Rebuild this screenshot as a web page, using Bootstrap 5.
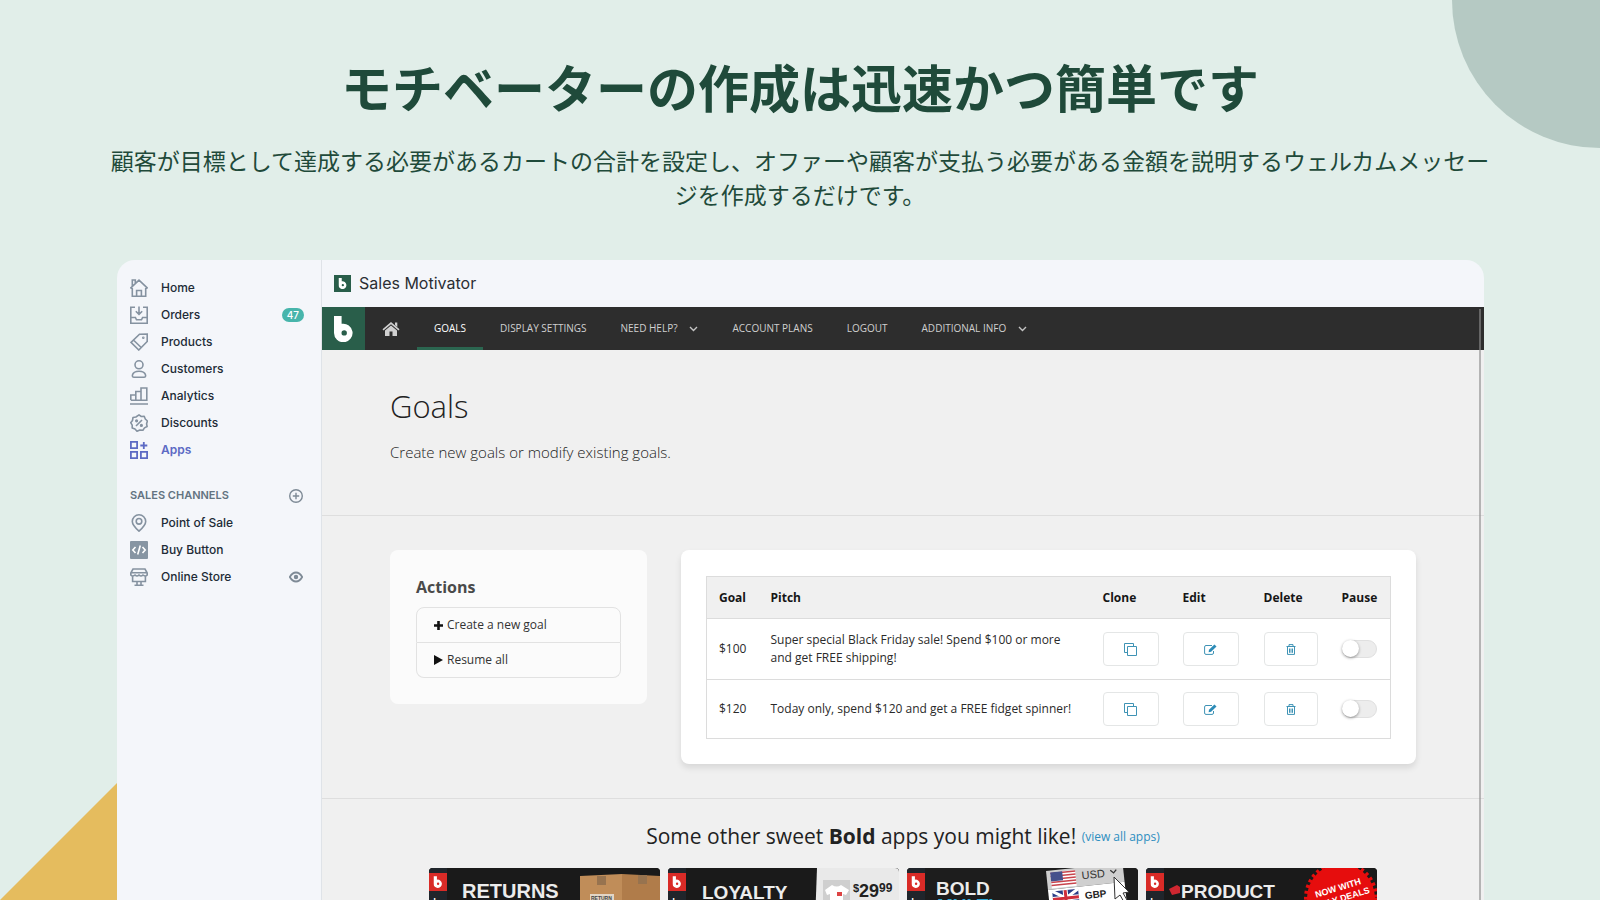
<!DOCTYPE html>
<html lang="ja">
<head>
<meta charset="utf-8">
<meta name="viewport" content="width=device-width, initial-scale=1">
<title>Sales Motivator</title>
<link href="https://cdn.jsdelivr.net/npm/bootstrap@5.3.0/dist/css/bootstrap.min.css" rel="stylesheet">
<style>
  body { background: #e1eee9; color: #1f4a3a; font-family: "Noto Sans CJK JP", sans-serif; }
  .stage { isolation: isolate; }
  .hero { padding: 48px 110px 0; }
  .hero h1 { font-size: 51px; line-height: 76px; font-weight: 700; margin-bottom: 19px; }
  .hero p { font-size: 23px; line-height: 34px; margin-bottom: 49px; }
  .deco-circle { top: -148px; right: -148px; width: 296px; height: 296px; border-radius: 50%; background: #b5c9c3; z-index: -1; }
  .deco-triangle { left: 0; bottom: 0; width: 117px; height: 117px; background: #e5bc5e; clip-path: polygon(0 100%, 100% 0, 100% 100%); z-index: -1; }
  .app-frame { margin: 0 116px 0 117px; border-radius: 18px 18px 0 0; background: #f4f6fa; font-family: Inter, sans-serif; color: #2b2e33; min-height: 0; }
  .side { width: 205px; border-right: 1px solid #dfe3e8; padding: 14px 16px 0 13px; font-size: 12px; }
  .side a, .side-head { height: 27px; font-weight: 500; color: #212b36; text-decoration: none; }
  .side a { gap: 13px; }
  .side a.current { color: #5c6ac4; font-weight: 600; }
  .side svg { flex: none; }
  .side .ico { width: 18px; height: 18px; stroke: #8592a0; fill: none; stroke-width: 1.6; }
  .side .current .ico { stroke: #5c6ac4; stroke-width: 1.8; }
  .side .ico-sm { width: 14px; height: 14px; stroke: #7e8a96; fill: none; stroke-width: 1.4; margin-right: 2px; }
  .side-head { margin-top: 19px; }
  .side-head h2 { font-size: 11px; font-weight: 600; color: #637381; }
  .count { background: #47b5ab; font-size: 10px; line-height: 14px; font-weight: 500; padding: 0 5px; margin-right: 1px; }
  .app-title { height: 47px; gap: 8px; padding-left: 12px; }
  .app-title h2 { font-size: 16px; font-weight: 400; }
  .app-body { font-family: "Open Sans", sans-serif; background: #f0f0f0; color: #222; }
  .topnav { background: #2d2d2d; height: 43px; font-size: 10px; }
  .topnav a { color: #d0d0d0; text-decoration: none; padding: 0 17px; border-bottom: 3px solid transparent; border-top: 3px solid transparent; gap: 12px; }
  .topnav a.brand { background: #295e4a; padding: 0; width: 43px; border: 0; }
  .topnav a.current { color: #fff; border-bottom-color: #2b6650; }
  .pane { padding: 34px 68px; border-bottom: 1px solid #dedede; }
  .pane-head { height: 166px; }
  .pane-head h3 { font-size: 31px; line-height: 44px; font-weight: 300; margin-bottom: 13px; }
  .pane-head p { font-size: 15px; line-height: 22px; font-weight: 300; }
  .pane-body { gap: 34px; }
  .panel { border-radius: 8px; padding: 26px; }
  .panel-actions { background: #fbfbfb; width: 257px; flex: none; }
  .panel-actions h4 { font-size: 16px; line-height: 22px; font-weight: 700; color: #4a4a4a; margin-bottom: 9px; }
  .panel-actions .list-group { --bs-list-group-bg: #fbfbfb; --bs-list-group-border-color: #e2e2e2; border-radius: 8px; }
  .panel-actions button { font-size: 12px; line-height: 18px; padding: 8px 17px; gap: 4px; color: #333; }
  .panel-goals { background: #fff; box-shadow: 0 4px 6px rgba(0,0,0,.1); padding: 26px 25px 25px; }
  .goal-table { font-size: 12px; line-height: 18px; border: 1px solid #dcdcdc; }
  .goal-table > :not(caption) > * > * { padding: 12px; border-bottom: 1px solid #dcdcdc; color: #2a2a2a; background: none; }
  .goal-table > thead > tr > th { background: #f0f0f0; font-weight: 700; color: #161616; padding-bottom: 11px; }
  .goal-table .btn { display: flex; align-items: center; justify-content: center; width: 56px; height: 34px; padding: 0; background: #fff; border: 1px solid #e4e6e6; border-radius: 4px; }
  .goal-table .btn-del { width: 54px; }
  .form-switch .form-check-input.tgl { display: block; width: 35px; height: 18px; margin: 0; float: none; border: 1px solid #e0e0e0; background: #ededed; position: relative; border-radius: 9px; }
  .tgl::before { content: ""; position: absolute; left: -1px; top: -1px; width: 17px; height: 17px; border-radius: 50%; background: #fff; box-shadow: 0 1px 3px rgba(0,0,0,.4); }
  .more { padding: 22px 0; }
  .more h3 { font-size: 21px; line-height: 30px; font-weight: 400; margin-bottom: 17px; }
  .more h3 a { font-size: 12px; line-height: 1; color: #2d8ec0; text-decoration: none; vertical-align: 3px; }
  .promos { gap: 8px; padding: 0 107px; }
  .promos a { flex: 1 1 0; border-radius: 4px; overflow: hidden; background: #1a1a1a; }
  .promos svg { display: block; width: 100%; }
  .promos text { font-family: "Liberation Sans", sans-serif; font-weight: 700; }
  .scrollline { top: 49px; bottom: 0; right: 3px; width: 2px; background: rgba(140,140,140,.6); }
</style>
</head>
<body>
<svg class="d-none">
  <symbol id="b" viewBox="0 0 20 26"><path d="M0 0H7.600V7.800A9.300 9.300 0 1 1 0 17ZM10.200 14.200A2.700 2.700 0 1 0 10.200 19.600A2.700 2.700 0 1 0 10.200 14.200Z" fill="#fff" fill-rule="evenodd"/></symbol>
  <symbol id="chev" viewBox="0 0 9 6"><path d="M1 1L4.500 4.500L8 1" fill="none" stroke="#c4c4c4" stroke-width="1.400"/></symbol>
  <symbol id="copy" viewBox="0 0 13 13"><path d="M3.500 3.500H12.500V12.500H3.500ZM3.500 9.500H.5V.5H9.500V3.500" fill="none" stroke="#3f93b5"/></symbol>
  <symbol id="edit" viewBox="0 0 13 11"><path d="M8 1.500H2Q.6 1.500 .6 3V9Q.6 10.400 2 10.400H8Q9.500 10.400 9.500 9V7" fill="none" stroke="#3f93b5"/><path d="M4.600 8.200L5 5.700L10.400.4L12.500 2.400L7.100 7.800Z" fill="#2d8cb8"/></symbol>
  <symbol id="trash" viewBox="0 0 10 11"><path d="M.5 2.500H9.500M3 2.500V.6H7V2.500M1.500 2.500V10.400H8.500V2.500M3.500 4.500V8.800M5 4.500V8.800M6.500 4.500V8.800" fill="none" stroke="#3f93b5"/></symbol>
</svg>

<div class="stage vh-100 d-flex flex-column position-relative overflow-hidden">
  <div class="deco-circle position-absolute"></div>
  <div class="deco-triangle position-absolute"></div>

  <header class="hero text-center">
    <h1>モチベーターの作成は迅速かつ簡単です</h1>
    <p>顧客が目標として達成する必要があるカートの合計を設定し、オファーや顧客が支払う必要がある金額を説明するウェルカムメッセージを作成するだけです。</p>
  </header>

  <div class="app-frame d-flex flex-grow-1 overflow-hidden position-relative">
    <aside class="side flex-shrink-0">
      <nav aria-label="Main">
        <a href="#" class="d-flex align-items-center"><svg class="ico" viewBox="0 0 18 18"><path d="M.8 8.800L9 1.200L17.200 8.800L15.700 9.800V17.200H2.300V9.800ZM2.300 7.300V1H5.300V4.500M6.600 17V11.500H11.400V17"/></svg>Home</a>
        <a href="#" class="d-flex align-items-center"><svg class="ico" viewBox="0 0 18 18"><path d="M5 1.300H.8V17.200H17.200V1.300H13M.8 11.500H5.400L6.500 13.800H11.500L12.600 11.500H17.200M9 .5V8M5.800 5.200L9 8.400L12.200 5.200"/></svg>Orders<span class="count badge rounded-pill ms-auto">47</span></a>
        <a href="#" class="d-flex align-items-center"><svg class="ico" viewBox="0 0 18 18"><path d="M9.500 1.200L17.200 1V8.500L8.800 17L1 9.300ZM3.400 7L11.200 14.500"/><circle cx="13.300" cy="4.800" r=".5"/></svg>Products</a>
        <a href="#" class="d-flex align-items-center"><svg class="ico" viewBox="0 0 18 18"><circle cx="9" cy="4.800" r="4"/><path d="M2.400 15.200C3 12.400 5.500 11.200 9 11.200S15 12.400 15.600 15.200Q15.800 17.200 14 17.200H4Q2.200 17.200 2.400 15.200Z"/></svg>Customers</a>
        <a href="#" class="d-flex align-items-center"><svg class="ico" viewBox="0 0 18 18"><path d="M.8 13V8H5.800V13.200M5.800 8V4.500H11V13.200M11 4.500V1H16.800V13.200H.8M0 17H18"/></svg>Analytics</a>
        <a href="#" class="d-flex align-items-center"><svg class="ico" viewBox="0 0 18 18"><path d="M9 .9L11.300 2.500L14.200 2.300L15.300 5L17.400 7L16.600 9.800L17.100 12.500L14.500 13.900L12.900 16.300L9.900 16L7 17.200L5 15L2.200 14L2.200 11.100L.7 8.700L2.500 6.400L3 3.500L5.900 3Z" stroke-linejoin="round"/><path d="M6 12L12 6"/><circle cx="6.600" cy="6.800" r=".8"/><circle cx="11.400" cy="11.400" r=".8"/></svg>Discounts</a>
        <a href="#" class="current d-flex align-items-center" aria-current="page"><svg class="ico" viewBox="0 0 18 18"><path d="M.9.9H7.100V7.100H.9ZM.9 10.900H7.100V17.100H.9ZM10.900 10.900H17.100V17.100H10.900ZM13.800 1V8M10.300 4.500H17.300"/></svg>Apps</a>
      </nav>
      <div class="side-head d-flex align-items-center justify-content-between">
        <h2 class="mb-0">SALES CHANNELS</h2>
        <button type="button" class="btn p-0 border-0 d-flex" aria-label="Add channel"><svg class="ico-sm" viewBox="0 0 14 14"><circle cx="7" cy="7" r="6.300"/><path d="M7 3.800V10.200M3.800 7H10.200"/></svg></button>
      </div>
      <nav aria-label="Sales channels">
        <a href="#" class="d-flex align-items-center"><svg class="ico" viewBox="0 0 18 18"><path d="M9 17.200C6 14.500 2.300 11 2.300 7.500A6.700 6.700 0 0 1 15.700 7.500C15.700 11 12 14.500 9 17.200Z"/><circle cx="9" cy="7.300" r="2.800"/></svg>Point of Sale</a>
        <a href="#" class="d-flex align-items-center"><svg class="ico" viewBox="0 0 18 18"><rect width="18" height="18" rx="1" fill="#8795a3" stroke="none"/><path d="M5.500 6L2.800 9L5.500 12M12.500 6L15.200 9L12.500 12M10.300 4.500L7.700 13.500" stroke="#fff"/></svg>Buy Button</a>
        <a href="#" class="d-flex align-items-center"><svg class="ico" viewBox="0 0 18 18"><path d="M3 1H15L17.200 5V7Q15.500 9 13 7Q11 9 9 7Q7 9 5 7Q2.500 9 .8 7V5ZM.8 4.800H17.200M2.600 8.500V13.500H15.400V8.500M7 13.500V17M11 13.500V17M4.500 17.200H13.500"/></svg>Online Store<svg class="ico-sm ms-auto" viewBox="0 0 14 14"><path d="M.8 7C2.500 4 4.500 2.500 7 2.500S11.500 4 13.200 7C11.500 10 9.500 11.500 7 11.500S2.500 10 .8 7Z" stroke-width="1.800"/><circle cx="7" cy="7" r="1.500" fill="#7e8a96"/></svg></a>
      </nav>
    </aside>

    <main class="flex-grow-1">
      <div class="app-title d-flex align-items-center">
        <svg width="17" height="17" viewBox="0 0 17 17"><rect width="17" height="17" fill="#295e4a"/><use href="#b" x="4.500" y="3" width="8.500" height="11"/></svg>
        <h2 class="mb-0">Sales Motivator</h2>
      </div>
      <div class="app-body">
        <nav class="topnav d-flex align-items-stretch" aria-label="App">
          <a href="#" class="brand d-flex align-items-center justify-content-center" aria-label="Bold"><svg width="20" height="26"><use href="#b"/></svg></a>
          <a href="#" class="d-flex align-items-center" aria-label="Home"><svg width="18" height="14" viewBox="0 0 17 14"><path d="M8.500 0L17 7.200L16 8.400L8.500 2.200L1 8.400L0 7.200ZM12.500 .5H14.800V5L12.500 3ZM8.500 3.500L14.500 8.500V14H10V9.500H7V14H2.500V8.500Z" fill="#d0d0d0"/></svg></a>
          <a href="#" class="current d-flex align-items-center">GOALS</a>
          <a href="#" class="d-flex align-items-center">DISPLAY SETTINGS</a>
          <a href="#" class="d-flex align-items-center">NEED HELP?<svg width="9" height="6"><use href="#chev"/></svg></a>
          <a href="#" class="d-flex align-items-center">ACCOUNT PLANS</a>
          <a href="#" class="d-flex align-items-center">LOGOUT</a>
          <a href="#" class="d-flex align-items-center">ADDITIONAL INFO<svg width="9" height="6"><use href="#chev"/></svg></a>
        </nav>

        <section class="pane pane-head">
          <h3>Goals</h3>
          <p class="mb-0">Create new goals or modify existing goals.</p>
        </section>

        <section class="pane pane-body d-flex align-items-start">
          <div class="panel panel-actions">
            <h4>Actions</h4>
            <div class="list-group">
              <button type="button" class="list-group-item list-group-item-action d-flex align-items-center"><svg width="9" height="9" viewBox="0 0 9 9"><path d="M3.200 0H5.800V3.200H9V5.800H5.800V9H3.200V5.800H0V3.200H3.200Z" fill="#111"/></svg>Create a new goal</button>
              <button type="button" class="list-group-item list-group-item-action d-flex align-items-center"><svg width="9" height="10" viewBox="0 0 9 10"><path d="M0 0L9 5L0 10Z" fill="#111"/></svg>Resume all</button>
            </div>
          </div>

          <div class="panel panel-goals flex-grow-1">
            <table class="goal-table table mb-0 align-middle">
              <colgroup><col style="width:52px"><col><col style="width:80px"><col style="width:81px"><col style="width:77px"><col style="width:61px"></colgroup>
              <thead><tr><th scope="col">Goal</th><th scope="col">Pitch</th><th scope="col">Clone</th><th scope="col">Edit</th><th scope="col">Delete</th><th scope="col">Pause</th></tr></thead>
              <tbody>
                <tr>
                  <td>$100</td><td>Super special Black Friday sale! Spend $100 or more and get FREE shipping!</td>
                  <td><button type="button" class="btn" aria-label="Clone"><svg width="13" height="13"><use href="#copy"/></svg></button></td>
                  <td><button type="button" class="btn" aria-label="Edit"><svg width="13" height="11"><use href="#edit"/></svg></button></td>
                  <td><button type="button" class="btn btn-del" aria-label="Delete"><svg width="10" height="11"><use href="#trash"/></svg></button></td>
                  <td><div class="form-switch p-0"><input class="form-check-input tgl" type="checkbox" role="switch" aria-label="Pause"></div></td>
                </tr>
                <tr>
                  <td>$120</td><td>Today only, spend $120 and get a FREE fidget spinner!</td>
                  <td><button type="button" class="btn" aria-label="Clone"><svg width="13" height="13"><use href="#copy"/></svg></button></td>
                  <td><button type="button" class="btn" aria-label="Edit"><svg width="13" height="11"><use href="#edit"/></svg></button></td>
                  <td><button type="button" class="btn btn-del" aria-label="Delete"><svg width="10" height="11"><use href="#trash"/></svg></button></td>
                  <td><div class="form-switch p-0"><input class="form-check-input tgl" type="checkbox" role="switch" aria-label="Pause"></div></td>
                </tr>
              </tbody>
            </table>
          </div>
        </section>

        <section class="more">
          <h3 class="text-center">Some other sweet <b>Bold</b> apps you might like! <a href="#">(view all apps)</a></h3>
          <div class="promos d-flex">
            <a href="#"><svg viewBox="0 0 231 110">
              <rect width="231" height="110" fill="#1a1a1a"/><rect width="18" height="110" fill="#20252b"/>
              <rect y="5" width="18" height="18" fill="#d92b27"/><use href="#b" x="4.500" y="8" width="9" height="12"/>
              <text transform="translate(13 45) rotate(-90)" font-size="10" fill="#fff">FIT</text>
              <text x="33" y="30" font-size="20" fill="#ececec">RETURNS</text>
              <path d="M151 8L193 6V110H151Z" fill="#c08d59"/><path d="M193 6L231 8V110H193Z" fill="#b07c4a"/><path d="M168 8H177V17H168ZM209 7H218V16H209Z" fill="#97734f"/>
              <rect x="161" y="26" width="24" height="14" fill="#e2d5c5"/><text x="162" y="32" font-size="5" fill="#444">RETURN</text>
            </svg></a>
            <a href="#"><svg viewBox="0 0 231 110">
              <rect width="231" height="110" fill="#1a1a1a"/><rect width="18" height="110" fill="#20252b"/>
              <rect y="5" width="18" height="18" fill="#d92b27"/><use href="#b" x="4.500" y="8" width="9" height="12"/>
              <text transform="translate(13 45) rotate(-90)" font-size="10" fill="#fff">FIT</text>
              <text x="34" y="31" font-size="19" fill="#ececec">LOYALTY</text>
              <path d="M149 0H231V110H145Z" fill="#e9e9e9"/><rect x="155" y="12" width="27" height="30" fill="#cfcfcf"/>
              <path d="M157 22L164 17Q169 20 173 17L181 22L178 27L175 26V42H162V26L159 27Z" fill="#fff"/><rect x="169" y="24" width="5" height="4" fill="#d44"/>
              <text x="185" y="24" font-size="11" fill="#222">$</text><text x="191" y="29" font-size="18" fill="#222">29</text><text x="211" y="24" font-size="12" fill="#222">99</text>
            </svg></a>
            <a href="#"><svg viewBox="0 0 231 110">
              <rect width="231" height="110" fill="#1d1d1d"/><rect width="18" height="110" fill="#20252b"/>
              <rect y="5" width="18" height="18" fill="#d92b27"/><use href="#b" x="4.500" y="8" width="9" height="12"/>
              <text transform="translate(13 45) rotate(-90)" font-size="10" fill="#fff">FIT</text>
              <text x="29" y="27" font-size="19" fill="#ececec">BOLD</text><text x="30" y="44" font-size="19" fill="#2fa9d8">MULTI</text>
              <g transform="translate(139 3) rotate(-6)">
                <rect width="77" height="19" fill="#cfcfcf"/><rect y="19" width="77" height="24" fill="#fff"/>
                <rect x="4" y="2" width="25" height="16" fill="#fff"/><path d="M4 3H29M4 6H29M4 9H29M4 12H29M4 15H29" stroke="#c8444c" stroke-width="1.500"/><rect x="4" y="2" width="12" height="9" fill="#46508c"/>
                <text x="35" y="12" font-size="11" fill="#333" style="font-weight:400">USD</text><path d="M64 6L67 9L70 6" fill="none" stroke="#333" stroke-width="1.300"/>
                <rect x="4" y="21" width="26" height="16" fill="#2b3c86"/><path d="M4 21L30 37M30 21L4 37" stroke="#fff" stroke-width="3"/><path d="M17 21V37M4 29H30" stroke="#fff" stroke-width="5"/><path d="M17 21V37M4 29H30" stroke="#cf2e3c" stroke-width="3"/>
                <text x="36" y="32" font-size="10" fill="#222">GBP</text>
              </g>
              <path d="M207 9L222 24L216 25L220 32L217 34L213 27L208 31Z" fill="#fff" stroke="#333"/>
            </svg></a>
            <a href="#"><svg viewBox="0 0 231 110">
              <rect width="231" height="110" fill="#1a1a1a"/><rect width="18" height="110" fill="#20252b"/>
              <rect y="5" width="18" height="18" fill="#d92b27"/><use href="#b" x="4.500" y="8" width="9" height="12"/>
              <text transform="translate(13 45) rotate(-90)" font-size="10" fill="#fff">FIT</text>
              <path d="M23 21L31 17L34 19V25L26 27Z" fill="#cf2730"/>
              <text x="35" y="30" font-size="19" fill="#ececec">PRODUCT</text>
              <circle cx="195" cy="30" r="34" fill="#e60d0d"/><circle cx="195" cy="30" r="35" fill="none" stroke="#e60d0d" stroke-width="4" stroke-dasharray="3 3"/>
              <g transform="translate(192 20) rotate(-17)" text-anchor="middle" fill="#fff"><text y="3" font-size="9">NOW WITH</text><text y="14" font-size="9">DAILY DEALS</text></g>
            </svg></a>
          </div>
        </section>
      </div>
    </main>
    <div class="scrollline position-absolute"></div>
  </div>
</div>
<script src="https://cdn.jsdelivr.net/npm/bootstrap@5.3.0/dist/js/bootstrap.bundle.min.js"></script>
</body>
</html>
